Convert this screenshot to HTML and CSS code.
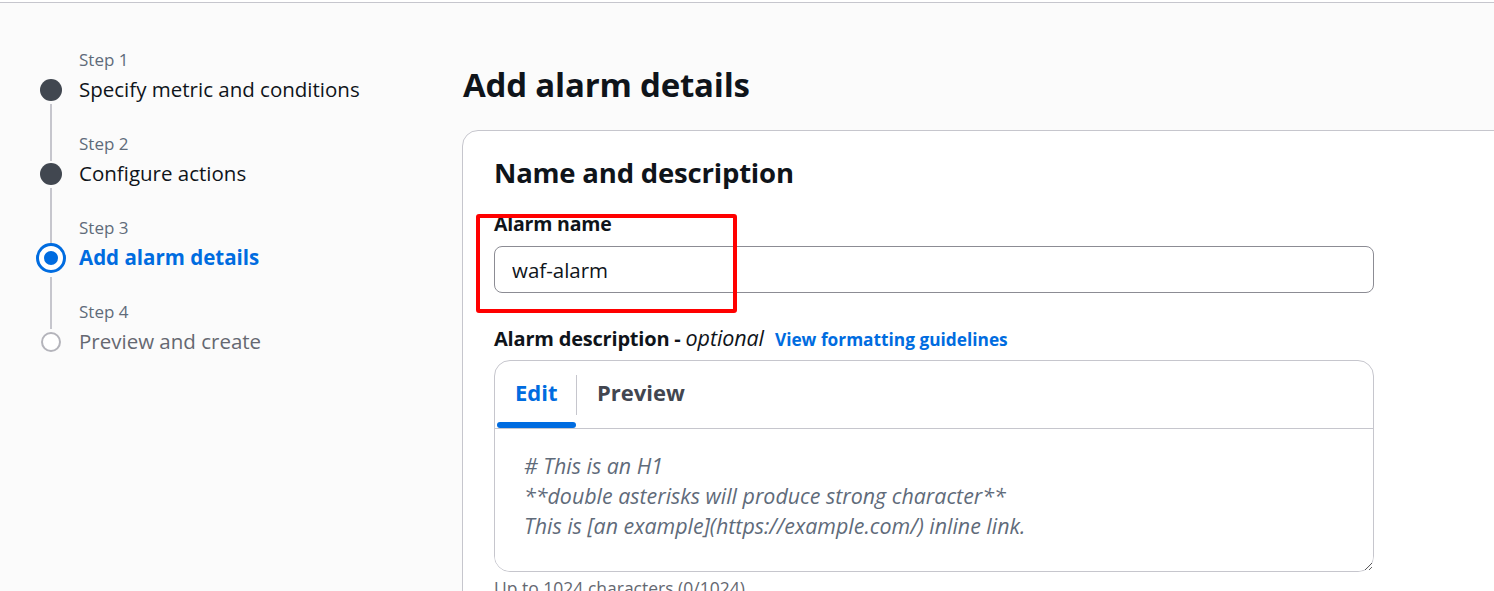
FILE: index.html
```html
<!DOCTYPE html>
<html lang="en">
<head>
<meta charset="utf-8">
<title>Add alarm details</title>
<link rel="stylesheet" href="styles.css">
</head>
<body>
<div class="topline"></div>
<div class="layout">
  <nav class="steps">
    <div class="step done">
      <div class="step-label">Step 1</div>
      <div class="step-row"><span class="dot"></span><span class="step-title">Specify metric and conditions</span></div>
    </div>
    <div class="step done">
      <div class="step-label">Step 2</div>
      <div class="step-row"><span class="dot"></span><span class="step-title">Configure actions</span></div>
    </div>
    <div class="step active">
      <div class="step-label">Step 3</div>
      <div class="step-row"><span class="dot"></span><span class="step-title">Add alarm details</span></div>
    </div>
    <div class="step todo last">
      <div class="step-label">Step 4</div>
      <div class="step-row"><span class="dot"></span><span class="step-title">Preview and create</span></div>
    </div>
  </nav>
  <main class="main">
    <h1 class="page-title">Add alarm details</h1>
    <section class="card">
      <h2 class="card-title">Name and description</h2>
      <div class="field name-field">
        <label class="label" for="alarm-name">Alarm name</label>
        <input id="alarm-name" class="input" type="text" value="waf-alarm">
        <div class="highlight"></div>
      </div>
      <div class="field">
        <div class="label-row">
          <span class="label desc-label">Alarm description - <em>optional</em></span>
          <a class="link" href="#">View formatting guidelines</a>
        </div>
        <div class="editor">
          <div class="tabs">
            <div class="tab tab-active">Edit</div>
            <div class="tab-sep"></div>
            <div class="tab">Preview</div>
          </div>
          <textarea class="textarea" placeholder="# This is an H1
**double asterisks will produce strong character**
This is [an example](https://example.com/) inline link."></textarea>
        </div>
        <div class="hint">Up to 1024 characters (0/1024).</div>
      </div>
    </section>
  </main>
</div>
</body>
</html>
```

FILE: styles.css
```css
* { box-sizing: border-box; }
html, body { margin: 0; padding: 0; }
body {
  background: #fbfbfb;
  font-family: "Open Sans", "Noto Sans", sans-serif;
  color: #0f141a;
  overflow: hidden;
  height: 591px;
}
.topline {
  height: 3px;
  background: #fff;
  border-bottom: 1px solid #c6c6cd;
}
.layout {
  display: flex;
}
.steps {
  width: 462px;
  flex: none;
  padding: 46px 0 0 40px;
}
.step {
  position: relative;
  padding-left: 39px;
  height: 84px;
}
.step::after {
  content: "";
  position: absolute;
  left: 10px;
  top: 55px;
  width: 2px;
  height: 57px;
  background: #c6c6cd;
}
.step.active::after { top: 60px; height: 52px; }
.step.last::after { display: none; }
.step-label {
  font-size: 17px;
  line-height: 22px;
  color: #5f6b7a;
}
.step-row {
  position: relative;
  margin-top: 5px;
  line-height: 26px;
}
.step-title {
  font-size: 20.5px;
  color: #0f141a;
}
.dot {
  position: absolute;
  left: -39px;
  top: 3px;
  width: 22px;
  height: 22px;
  border-radius: 50%;
  background: #414750;
}
.active .dot {
  left: -43px;
  top: -1px;
  width: 30px;
  height: 30px;
  background: #fff;
  border: 3px solid #006ce0;
}
.active .dot::after {
  content: "";
  position: absolute;
  left: 5px;
  top: 5px;
  width: 14px;
  height: 14px;
  border-radius: 50%;
  background: #006ce0;
}
.active .step-title { color: #006ce0; font-weight: 700; }
.todo .dot {
  left: -38px;
  top: 4px;
  width: 20px;
  height: 20px;
  background: #fff;
  border: 2px solid #b4b4bb;
}
.todo .step-title { color: #656871; }

.main {
  flex: 1;
  min-width: 0;
}
.page-title {
  margin: 62px 0 0 1px;
  font-size: 33px;
  line-height: 40px;
  font-weight: 700;
  letter-spacing: -0.2px;
}
.card {
  margin-top: 25px;
  width: 1100px;
  background: #fff;
  border: 1px solid #c6c6cd;
  border-radius: 16px;
  padding: 23px 0 40px 31px;
  height: 600px;
}
.card-title {
  margin: 0;
  font-size: 27.5px;
  line-height: 38px;
  font-weight: 700;
  letter-spacing: -0.2px;
}
.field { width: 880px; position: relative; }
.name-field { margin-top: 20px; }
.label {
  display: block;
  font-size: 19.5px;
  font-weight: 700;
  line-height: 24px;
  letter-spacing: -0.2px;
}
.desc-label { font-size: 20px; }
.label em { font-weight: 400; font-style: italic; font-size: 21.5px; letter-spacing: -0.1px; }
.input {
  display: block;
  margin-top: 10px;
  width: 880px;
  height: 47px;
  border: 1px solid #8c8c94;
  border-radius: 8px;
  padding: 0 17px;
  font: inherit;
  font-size: 20.5px;
  color: #0f141a;
  background: #fff;
}
.highlight {
  position: absolute;
  left: -18px;
  top: 2px;
  width: 261px;
  height: 99px;
  border: 4px solid #ff0000;
  border-radius: 3px;
  pointer-events: none;
}
.field + .field { margin-top: 33px; }
.label-row {
  display: flex;
  align-items: baseline;
  gap: 11px;
}
.label-row .label { display: inline; }
.link {
  color: #006ce0;
  font-weight: 700;
  font-size: 17.3px;
  text-decoration: none;
}
.editor {
  margin-top: 9px;
  border: 1px solid #c6c6cd;
  border-radius: 16px;
  background: #fff;
}
.tabs {
  display: flex;
  align-items: center;
  height: 68px;
  border-bottom: 1px solid #c6c6cd;
  padding-left: 2px;
}
.tab {
  position: relative;
  height: 100%;
  display: flex;
  align-items: center;
  padding: 0 19px 5px 20px;
  font-size: 22px;
  font-weight: 700;
  color: #424650;
}
.tab-active { color: #006ce0; width: 79px; padding-left: 18px; }
.tab-active::after {
  content: "";
  position: absolute;
  left: 0;
  right: 0;
  bottom: 0;
  height: 6px;
  border-radius: 3px;
  background: #006ce0;
}
.tab-sep {
  width: 1px;
  height: 40px;
  background: #c6c6cd;
  margin-right: 0;
}
.textarea {
  display: block;
  width: 100%;
  height: 142px;
  border: none;
  border-radius: 0 0 15px 15px;
  padding: 22px 29px;
  font: inherit;
  font-size: 21.4px;
  line-height: 30px;
  resize: vertical;
  outline: none;
  background: #fff;
}
.textarea::placeholder {
  color: #5f6b7a;
  font-style: italic;
}
.hint {
  margin-top: 4px;
  font-size: 17.5px;
  line-height: 24px;
  color: #656871;
}
```
